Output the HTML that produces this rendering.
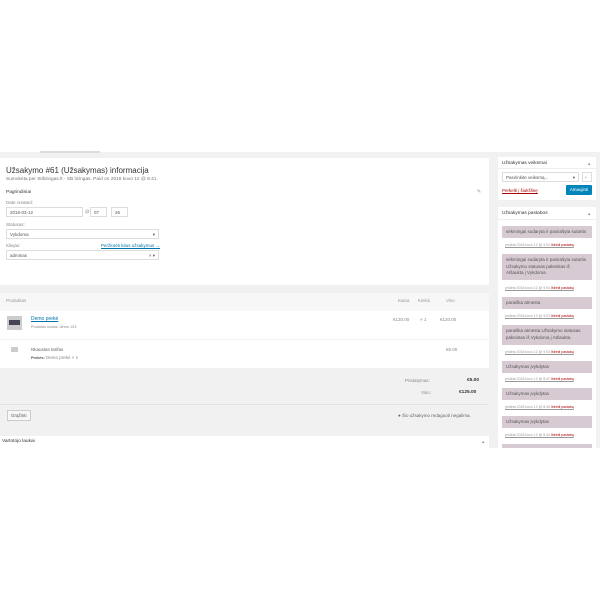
<!DOCTYPE html>
<html><head><style>
*{margin:0;padding:0;box-sizing:border-box}
body{width:600px;height:600px;background:#fff;font-family:"Liberation Sans",sans-serif;color:#444;position:relative;overflow:hidden}
.a{position:absolute}
.g{background:#f1f1f1}
.w{background:#fff}
.t{font-size:4.5px;color:#888;white-space:nowrap}
.in{position:absolute;border:1px solid #ddd;background:#fff;font-size:4.5px;color:#555;padding:2px 3px;height:10px}
.note{position:absolute;left:502px;width:90px;background:#d7cad2;font-size:4.5px;color:#555;padding:3px 4px;line-height:6.5px}
.meta{position:absolute;left:505px;font-size:3.5px;color:#999;text-decoration:underline}
.meta b{color:#a00;font-weight:normal}
</style></head><body>
<div class="a g" style="left:0;top:152px;width:600px;height:296px"></div>
<div class="a" style="left:40px;top:151px;width:60px;height:2px;background:#ddd"></div>
<!-- main panel -->
<div class="a w" style="left:0;top:158px;width:489px;height:127px"></div>
<div class="a" style="left:6px;top:166px;font-size:8px;color:#333">Užsakymo #61 (Užsakymas) informacija</div>
<div class="a t" style="left:6px;top:177px;font-size:4.8px;color:#777">Sumokėta per Stilizingas.lt - SB lizingas. Paid on 2018 kovo 12 @ 8:41.</div>
<div class="a" style="left:6px;top:190px;font-size:4.8px;color:#333">Pagrindiniai</div>
<div class="a" style="left:477px;top:189px;font-size:5px;color:#999">✎</div>
<div class="a t" style="left:6px;top:200px">Date created:</div>
<div class="in" style="left:6px;top:207px;width:77px">2018-03-12</div>
<div class="a t" style="left:85px;top:209px">@</div>
<div class="in" style="left:90px;top:207px;width:17px">07</div>
<div class="in" style="left:111px;top:207px;width:17px">26</div>
<div class="a t" style="left:6px;top:222px">Statusas:</div>
<div class="in" style="left:6px;top:229px;width:153px">Vykdoma<span style="float:right">▾</span></div>
<div class="a t" style="left:6px;top:243px">Kliejas:</div>
<div class="a" style="left:101px;top:243px;font-size:4.5px;color:#0073aa;text-decoration:underline">Peržiūrėti kitus užsakymus →</div>
<div class="in" style="left:6px;top:250px;width:153px">adminas<span style="float:right">× ▾</span></div>
<!-- items -->
<div class="a g" style="left:0;top:293px;width:489px;height:18px;background:#f7f7f7"></div>
<div class="a t" style="left:6px;top:298px;color:#999">Produktas</div>
<div class="a t" style="left:398px;top:298px;color:#999">Kaina</div>
<div class="a t" style="left:418px;top:298px;color:#999">Kiekis</div>
<div class="a t" style="left:446px;top:298px;color:#999">Viso</div>
<div class="a w" style="left:0;top:311px;width:489px;height:28px"></div>
<div class="a" style="left:7px;top:316px;width:15px;height:14px;background:#ccc"><div style="margin:4px 2px;height:5px;background:#445"></div></div>
<div class="a" style="left:31px;top:316px;font-size:5px;color:#0073aa;text-decoration:underline">Demo prekė</div>
<div class="a t" style="left:31px;top:325px;font-size:3.8px">Produkto kodas: demo 123</div>
<div class="a t" style="left:393px;top:317px">€120.00</div>
<div class="a t" style="left:420px;top:317px">× 1</div>
<div class="a t" style="left:440px;top:317px">€120.00</div>
<div class="a w" style="left:0;top:340px;width:489px;height:28px"></div>
<div class="a" style="left:11px;top:347px;width:7px;height:5px;background:#ccc"></div>
<div class="a t" style="left:31px;top:347px;color:#666">Nkaustas tarifas</div>
<div class="a t" style="left:31px;top:355px;color:#888"><b style="font-size:3.8px;color:#555">Prekės:</b> Demo prekė × 1</div>
<div class="a t" style="left:446px;top:347px">€5.00</div>
<div class="a t" style="left:405px;top:378px">Pristatymas:</div>
<div class="a" style="left:467px;top:378px;font-size:4.8px;font-weight:bold;color:#333">€5.00</div>
<div class="a t" style="left:421px;top:390px">Viso:</div>
<div class="a" style="left:459px;top:390px;font-size:4.8px;font-weight:bold;color:#333">€125.00</div>
<div class="a" style="left:0;top:404px;width:489px;height:1px;background:#e2e2e2"></div>
<div class="a" style="left:7px;top:410px;width:24px;height:11px;border:1px solid #ccc;background:#f7f7f7;font-size:4.5px;color:#555;padding:2px 3px">Grąžinti</div>
<div class="a t" style="left:398px;top:413px;color:#666">● Šio užsakymo redaguoti negalima.</div>
<div class="a w" style="left:0;top:436px;width:489px;height:12px"></div>
<div class="a" style="left:2px;top:439px;font-size:4.8px;color:#333">Vartotojo laukai</div>
<div class="a t" style="left:482px;top:439px">▴</div>
<!-- right column -->
<div class="a w" style="left:498px;top:157px;width:98px;height:43px"></div>
<div class="a" style="left:502px;top:161px;font-size:4.8px;color:#333">Užsakymas veiksmai</div>
<div class="a t" style="left:588px;top:161px">▴</div>
<div class="a" style="left:498px;top:168px;width:98px;height:1px;background:#eee"></div>
<div class="in" style="left:502px;top:172px;width:77px">Pasirinkite veiksmą...<span style="float:right">▾</span></div>
<div class="in" style="left:582px;top:172px;width:10px;padding:2px">›</div>
<div class="a" style="left:502px;top:188px;font-size:4.5px;color:#a00;text-decoration:underline">Perkelti į šiukšlinę</div>
<div class="a" style="left:566px;top:185px;width:26px;height:10px;background:#0085ba;color:#fff;font-size:4.5px;text-align:center;line-height:10px;border-radius:1px">Atnaujinti</div>
<div class="a w" style="left:498px;top:207px;width:98px;height:241px"></div>
<div class="a" style="left:502px;top:211px;font-size:4.8px;color:#333">Užsakymas pastabos</div>
<div class="a t" style="left:588px;top:211px">▴</div>
<div class="a" style="left:498px;top:219px;width:98px;height:1px;background:#eee"></div>
<div class="note" style="top:226px;height:12px">sėkmingai sudaryta ir pasirašyta sutartis</div>
<div class="meta" style="top:243px">pridėta 2018 kovo 12 @ 9:04 <b>Ištrinti pastabą</b></div>
<div class="note" style="top:254px;height:26px">sėkmingai sudaryta ir pasirašyta sutartis Užsakymo statusas pakeistas iš Atšaukta į Vykdoma.</div>
<div class="meta" style="top:286px">pridėta 2018 kovo 12 @ 9:04 <b>Ištrinti pastabą</b></div>
<div class="note" style="top:297px;height:12px">paraiška atmesta</div>
<div class="meta" style="top:314px">pridėta 2018 kovo 12 @ 9:03 <b>Ištrinti pastabą</b></div>
<div class="note" style="top:325px;height:20px">paraiška atmesta Užsakymo statusas pakeistas iš Vykdoma į Atšaukta.</div>
<div class="meta" style="top:350px">pridėta 2018 kovo 12 @ 9:03 <b>Ištrinti pastabą</b></div>
<div class="note" style="top:361px;height:12px">Užsakymas įvykdytas</div>
<div class="meta" style="top:377px">pridėta 2018 kovo 12 @ 8:47 <b>Ištrinti pastabą</b></div>
<div class="note" style="top:388px;height:12px">Užsakymas įvykdytas</div>
<div class="meta" style="top:405px">pridėta 2018 kovo 12 @ 8:45 <b>Ištrinti pastabą</b></div>
<div class="note" style="top:416px;height:12px">Užsakymas įvykdytas</div>
<div class="meta" style="top:433px">pridėta 2018 kovo 12 @ 8:44 <b>Ištrinti pastabą</b></div>
<div class="note" style="top:444px;height:4px;padding:0"></div>
</body></html>
